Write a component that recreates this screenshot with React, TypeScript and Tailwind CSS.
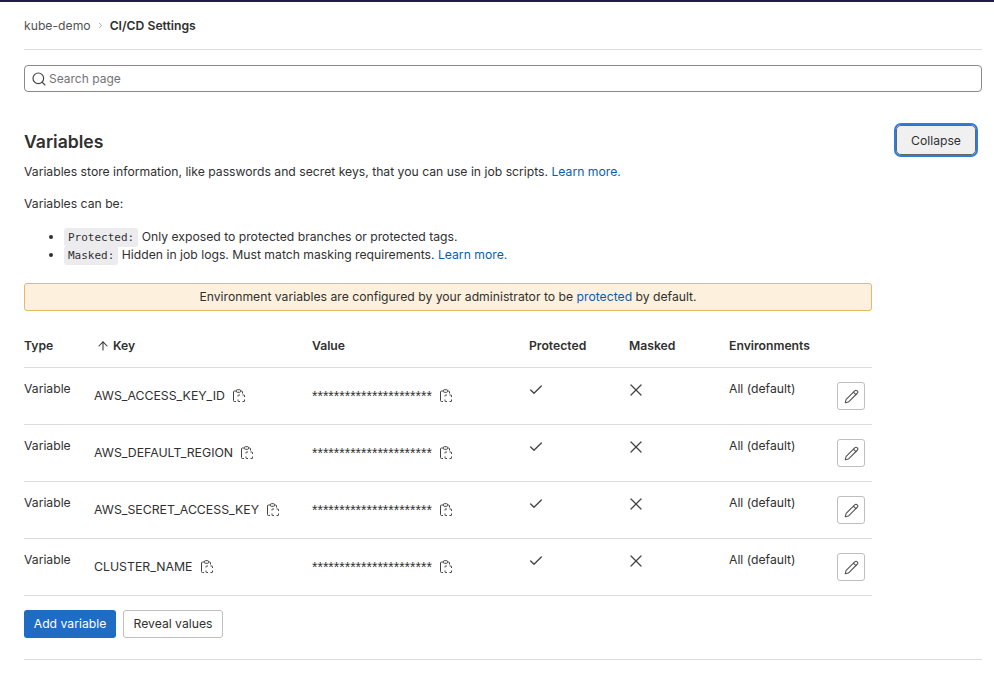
import { Check, Pencil, Search, X, ChevronRight, ArrowUp } from 'lucide-react';

const rows = ['AWS_ACCESS_KEY_ID', 'AWS_DEFAULT_REGION', 'AWS_SECRET_ACCESS_KEY', 'CLUSTER_NAME'];

function CopyIcon() {
  return (
    <svg width="12" height="14" viewBox="0 0 12 14" fill="none" stroke="#444" strokeWidth="1" className="shrink-0">
      <path d="M3.500 2H1.500a1 1 0 0 0-1 1v8.500a1 1 0 0 0 1 1H3" />
      <path d="M7.500 2H8.500a1 1 0 0 1 1 1v1.500" />
      <rect x="3.500" y="0.700" width="4" height="2.600" rx="0.800" />
      <path d="M5 7.500V6.500a.5.5 0 0 1 .5-.5H7M9.500 6H11a.5.5 0 0 1 .5.5V8M11.500 10.500V12a.5.5 0 0 1-.5.5H9.500M7 12.500H5.500a.5.5 0 0 1-.5-.5v-1.500" />
    </svg>
  );
}

export default function App() {
  return (
    <div className="h-[673px] w-[994px] overflow-hidden bg-white text-[12.2px] leading-[18px] text-[#303030] font-['Inter',sans-serif]">
      <div className="h-[2px] bg-[#1f1e4a]" />

      <div className="pl-6 pr-3">
        <div className="flex h-[48px] items-center border-b border-[#dcdcde]">
          <span className="text-[#525252]">kube-demo</span>
          <ChevronRight className="mx-[5px] h-[9px] w-[9px] text-[#8c8c90]" />
          <span className="font-semibold">CI/CD Settings</span>
        </div>

        <div className="mt-[15px] flex h-[27px] w-[958px] items-center gap-[2px] rounded-[4px] border border-[#89888d] pl-[6px] text-[12px] text-[#737278]">
          <Search className="h-[16px] w-[16px] text-[#444]" strokeWidth={1.75} />
          <span>Search page</span>
        </div>

        <div className="relative mt-[33px]">
          <button className="absolute right-[6px] top-0 flex h-[30px] w-[80px] items-center justify-center rounded-[5px] border border-[#666] bg-[#f0f0f0] pt-[1px] text-[#303030] outline outline-2 outline-[#2f7dd6]">
            Collapse
          </button>
          <h2 className="pt-[5px] text-[17.6px] font-semibold leading-[24px]">Variables</h2>
          <p className="mt-[9px]">
            Variables store information, like passwords and secret keys, that you can use in job scripts.{' '}
            <span className="text-[#0b5cad]">Learn more.</span>
          </p>
          <p className="mt-[14px]">Variables can be:</p>
          <ul className="mt-[15px] list-disc pl-[40px]">
            <li className="h-[18px]">
              <code className="rounded-[3px] bg-[#ececef] px-[4px] py-[3px] font-['DejaVu_Sans_Mono',monospace] text-[11px]">Protected:</code>{' '}
              Only exposed to protected branches or protected tags.
            </li>
            <li className="h-[18px]">
              <code className="rounded-[3px] bg-[#ececef] px-[4px] py-[3px] font-['DejaVu_Sans_Mono',monospace] text-[11px]">Masked:</code>{' '}
              Hidden in job logs. Must match masking requirements.{' '}
              <span className="text-[#0b5cad]">Learn more.</span>
            </li>
          </ul>
        </div>

        <div className="mt-[19px] w-[848px]">
          <div className="flex h-[28px] items-center justify-center rounded-[3px] border border-[#e9b863] bg-[#fdf1dd]">
            <span>
              Environment variables are configured by your administrator to be{' '}
              <span className="text-[#0b5cad]">protected</span> by default.
            </span>
          </div>

          <div className="grid h-[57px] grid-cols-[70px_218px_217px_100px_100px_143px] items-start border-b border-[#dcdcde] pt-[26px] font-semibold">
            <span>Type</span>
            <span className="flex items-center gap-[3px] pl-[2px]">
              <ArrowUp className="h-[14px] w-[14px]" strokeWidth={1.75} />
              Key
            </span>
            <span>Value</span>
            <span>Protected</span>
            <span>Masked</span>
            <span>Environments</span>
          </div>

          {rows.map((name) => (
            <div key={name} className="grid h-[57px] grid-cols-[70px_218px_217px_100px_100px_108px_35px] items-start border-b border-[#dcdcde] pt-[12px]">
              <span>Variable</span>
              <span className="mt-[7px] flex h-[18px] items-center gap-[8px] text-[12.3px]">
                {name}
                <CopyIcon />
              </span>
              <span className="mt-[7px] flex h-[18px] items-center gap-[8px]">
                <span className="font-['Liberation_Sans',sans-serif] text-[14px]">**********************</span>
                <CopyIcon />
              </span>
              <Check className="ml-[-1px] mt-[2px] h-[16px] w-[16px] text-[#444]" strokeWidth={2} />
              <X className="ml-[-3px] mt-[0px] h-[20px] w-[20px] text-[#444]" strokeWidth={1.5} />
              <span>All (default)</span>
              <button className="mt-[2px] flex h-[28px] w-[28px] items-center justify-center rounded-[3px] border border-[#bfbfc3] bg-white">
                <Pencil className="h-[15px] w-[15px] text-[#555]" strokeWidth={1.75} />
              </button>
            </div>
          ))}

          <div className="mt-[14px] flex gap-[7px]">
            <button className="flex h-[28px] w-[92px] items-center justify-center rounded-[3px] bg-[#1f6cc5] text-white">Add variable</button>
            <button className="flex h-[28px] w-[100px] items-center justify-center rounded-[3px] border border-[#bfbfc3] bg-white">Reveal values</button>
          </div>
        </div>

        <div className="mt-[21px] border-b border-[#dcdcde]" />
      </div>
    </div>
  );
}
